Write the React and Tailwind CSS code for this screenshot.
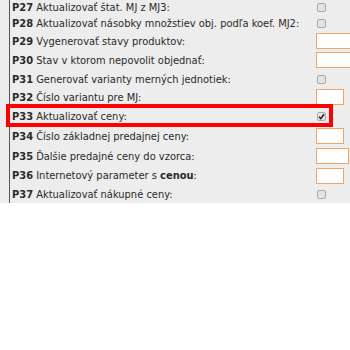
import React from "react";

const Checkbox = ({ checked }) => (
  <span className="inline-flex items-center justify-center w-[9px] h-[9px] rounded-[2px] border border-[#a9a9a9] bg-[#e4e4e4]">
    {checked && (
      <svg width="7" height="7" viewBox="0 0 7 7">
        <path d="M1 3.8 L2.8 5.6 L6 1.2" fill="none" stroke="#222" strokeWidth="1.6" />
      </svg>
    )}
  </span>
);

const Input = ({ w }) => (
  <span className={`block shrink-0 h-[16px] border border-[#f0a467] bg-white ${w}`} />
);

const rows = [
  { code: "P27", label: "Aktualizovať štat. MJ z MJ3:", kind: "check", h: "h-[14px]" },
  { code: "P28", label: "Aktualizovať násobky množstiev obj. podľa koef. MJ2:", kind: "check", h: "h-[18px]" },
  { code: "P29", label: "Vygenerovať stavy produktov:", kind: "input", w: "w-[60px]", h: "h-[18px]" },
  { code: "P30", label: "Stav v ktorom nepovolit objednať:", kind: "input", w: "w-[60px]", h: "h-[20px]" },
  { code: "P31", label: "Generovať varianty merných jednotiek:", kind: "check", h: "h-[18px]" },
  { code: "P32", label: "Číslo variantu pre MJ:", kind: "input", w: "w-[28px]", h: "h-[18px]" },
  { code: "P33", label: "Aktualizovať ceny:", kind: "checked", h: "h-[20px]" },
  { code: "P34", label: "Číslo základnej predajnej ceny:", kind: "input", w: "w-[28px]", h: "h-[20px]" },
  { code: "P35", label: "Ďalšie predajné ceny do vzorca:", kind: "input", w: "w-[33px]", h: "h-[20px]" },
  { code: "P36", label: "Internetový parameter s ", bold: "cenou", tail: ":", kind: "input", w: "w-[28px]", h: "h-[19px]" },
  { code: "P37", label: "Aktualizovať nákupné ceny:", kind: "check", h: "h-[18px]" },
];

export default function App() {
  return (
    <div className="relative w-[350px] h-[350px] bg-white overflow-hidden font-['DejaVu_Sans_Condensed','DejaVu_Sans',sans-serif] text-[11px] text-[#2a2a2a]">
      <div className="bg-[#ededed] pl-[9px]">
        <div className="border-l border-[#555] pl-[2px]">
          {rows.map((r) => (
            <div key={r.code} className={`flex items-center ${r.h}`}>
              <div className="w-[304px] shrink-0 whitespace-nowrap leading-none">
                <span className="font-bold">{r.code}</span> {r.label}
                {r.bold && <span className="font-bold">{r.bold}</span>}
                {r.tail}
              </div>
              <div className="flex items-center">
                {r.kind === "check" && (
                  <span className="ml-[1px] flex"><Checkbox /></span>
                )}
                {r.kind === "checked" && (
                  <span className="ml-[1px] flex"><Checkbox checked /></span>
                )}
                {r.kind === "input" && <Input w={r.w} />}
              </div>
            </div>
          ))}
        </div>
      </div>
      <div className="absolute top-[104px] left-[6px] w-[327px] h-[23px] border-4 border-[#ff0000]" />
    </div>
  );
}
